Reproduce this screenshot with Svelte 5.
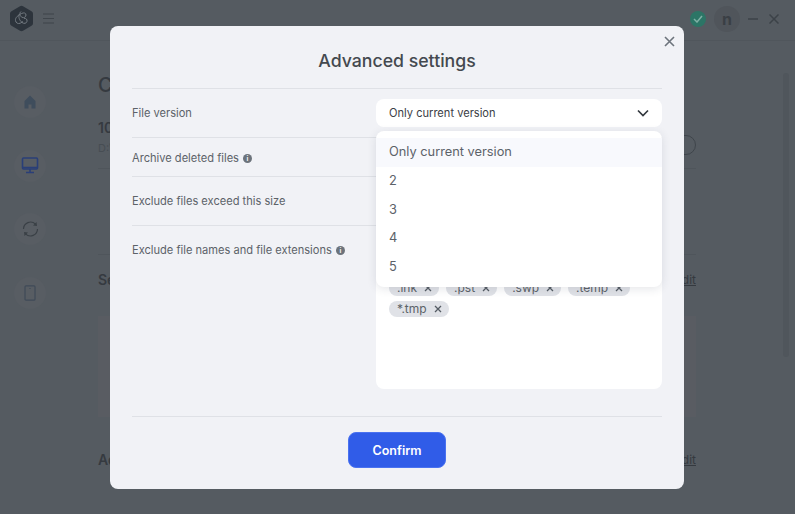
<script lang="ts">
	let versions = ['Only current version', '2', '3', '4', '5'];
	let selected = $state('Only current version');
	let open = $state(true);
	let tags = $state(['.backup', '.cache', '.download', '.lnk', '.pst', '.swp', '.temp', '*.tmp']);

	function removeTag(t: string) {
		tags = tags.filter((x) => x !== t);
	}
</script>

<div class="app">
	<header class="topbar">
		<div class="brand">
			<svg class="logo" width="25" height="27" viewBox="0 0 25 27">
				<path
					d="M11 1.200a3 3 0 0 1 3 0l8.500 5a3 3 0 0 1 1.500 2.600v9.400a3 3 0 0 1-1.500 2.600l-8.500 5a3 3 0 0 1-3 0l-8.500-5A3 3 0 0 1 1 18.200V8.800a3 3 0 0 1 1.500-2.600z"
					fill="#2d343c"
				/>
				<path
					d="M6.500 15.500c-.5-3 3-5.500 6-7 2.500-1.200 4.500-.5 4.500 1.500s-2 3.200-4 2.300-3-4.300-1-5.800M10.500 9c-1.500 3 0 6.500 2.500 8.500 2 1.500 4.500 1 5-1.200.4-1.800-1-3.300-3-3M6.500 15.500c.3 2.500 2.500 3.700 4.800 2.700l2.700-1.700"
					fill="none"
					stroke="#737a81"
					stroke-width="1"
				/>
			</svg>
			<svg class="menu" width="13" height="11" viewBox="0 0 13 11">
				<path d="M1 1h11M1 5.500h11M1 10h11" stroke="#3f454b" stroke-width="1.100" />
			</svg>
		</div>
		<div class="status">
			<span class="ok">
				<svg width="10" height="8" viewBox="0 0 10 8">
					<path d="m1 4 3 3 5-6" fill="none" stroke="#7fb0a5" stroke-width="1.500" />
				</svg>
			</span>
			<span class="avatar">n</span>
			<svg class="win-min" width="10" height="2" viewBox="0 0 10 2">
				<path d="M0 1h10" stroke="#3c4248" stroke-width="1.500" />
			</svg>
			<svg class="win-close" width="10" height="10" viewBox="0 0 10 10">
				<path d="m.5.500 9 9m0-9-9 9" stroke="#3c4248" stroke-width="1.500" />
			</svg>
		</div>
	</header>

	<div class="body">
		<nav class="sidebar">
			<span class="nav-item">
				<svg width="16" height="16" viewBox="0 0 16 16">
					<path d="M8 1.500 2.500 7v7.500h4v-4h3v4h4V7z" fill="#3f4d5c" />
				</svg>
			</span>
			<span class="nav-item">
				<svg width="18" height="17" viewBox="0 0 18 17">
					<rect x="1.500" y="1" width="15" height="11" rx="1" fill="none" stroke="#2a3f78" stroke-width="1.600" />
					<path d="M1.500 10.500h15M9 12v3M5 15.500h8" stroke="#2a3f78" stroke-width="1.600" />
				</svg>
			</span>
			<span class="nav-item">
				<svg width="19" height="18" viewBox="0 0 19 18">
					<path
						d="M2.500 9a7 7 0 0 1 12-4.800M16.500 9a7 7 0 0 1-12 4.800"
						fill="none"
						stroke="#3a4046"
						stroke-width="1.200"
					/>
					<path d="m15.500 2 .5 4-4-.5zM3.500 16 3 12l4 .5z" fill="#3a4046" />
				</svg>
			</span>
			<span class="nav-item">
				<svg width="12" height="16" viewBox="0 0 12 16">
					<rect x="1" y=".8" width="10" height="14.400" rx="1" fill="none" stroke="#3f4a58" stroke-width="1.200" />
					<path d="M6 3v1" stroke="#3f4a58" stroke-width="1.200" />
				</svg>
			</span>
		</nav>

		<main class="content">
			<h1>Computer</h1>
			<div class="source">
				<div>
					<p class="src-name">10.0.0.1</p>
					<p class="src-path">D:\Backup</p>
				</div>
				<span class="toggle"></span>
			</div>
			<div class="blank"></div>
			<div class="section-head">
				<h2>Settings</h2>
				<span class="edit">Edit</span>
			</div>
			<div class="panel"></div>
			<div class="section-head">
				<h2>Advanced</h2>
				<span class="edit">Edit</span>
			</div>
		</main>
		<div class="scrollbar"></div>
	</div>

	<div class="overlay">
		<div class="modal" role="dialog" aria-label="Advanced settings">
			<button class="close" aria-label="Close">
				<svg width="11" height="11" viewBox="0 0 11 11">
					<path d="m1 1 9 9m0-9-9 9" stroke="#6d747c" stroke-width="1.600" />
				</svg>
			</button>
			<h3>Advanced settings</h3>

			<div class="row r1">
				<span class="label">File version</span>
				<div class="field">
					<button class="select" onclick={() => (open = !open)}>
						<span>{selected}</span>
						<svg width="12" height="8" viewBox="0 0 12 8">
							<path d="m1 1.500 5 5 5-5" fill="none" stroke="#33383e" stroke-width="1.700" />
						</svg>
					</button>
					{#if open}
						<ul class="dropdown">
							{#each versions as v}
								<li class:active={v === selected}>{v}</li>
							{/each}
						</ul>
					{/if}
				</div>
			</div>

			<div class="row r2">
				<span class="label">
					Archive deleted files
					<span class="info">i</span>
				</span>
			</div>

			<div class="row r3">
				<span class="label">Exclude files exceed this size</span>
			</div>

			<div class="row r4">
				<span class="label">
					Exclude file names and file extensions
					<span class="info">i</span>
				</span>
				<div class="tagbox">
					{#each tags as t}
						<span class="tag">
							{t}
							<button class="tag-x" aria-label="Remove {t}" onclick={() => removeTag(t)}>
								<svg width="8" height="8" viewBox="0 0 8 8">
									<path d="m1 1 6 6m0-6-6 6" stroke="#555c64" stroke-width="1.300" />
								</svg>
							</button>
						</span>
					{/each}
				</div>
			</div>

			<div class="footer">
				<button class="confirm">Confirm</button>
			</div>
		</div>
	</div>
</div>

<style>
	:global(body) {
		margin: 0;
		font-family: Inter, 'Liberation Sans', sans-serif;
	}
	.app {
		position: relative;
		width: 795px;
		height: 514px;
		overflow: hidden;
		background: #555b61;
		color: #353a40;
		display: flex;
		flex-direction: column;
	}
	.topbar {
		height: 41px;
		flex: none;
		box-sizing: border-box;
		border-bottom: 1px solid #50565c;
		display: flex;
		align-items: center;
		justify-content: space-between;
		padding: 0 16px 3px 9px;
	}
	.brand,
	.status {
		display: flex;
		align-items: center;
	}
	.menu {
		margin-left: 8px;
	}
	.ok {
		width: 16px;
		height: 16px;
		border-radius: 50%;
		background: #2c7566;
		display: flex;
		align-items: center;
		justify-content: center;
	}
	.avatar {
		width: 26px;
		height: 26px;
		margin-left: 8px;
		border-radius: 50%;
		background: #50555b;
		color: #3a3f45;
		font-size: 16px;
		font-weight: 700;
		display: flex;
		align-items: center;
		justify-content: center;
	}
	.win-min {
		margin-left: 8px;
	}
	.win-close {
		margin-left: 11px;
	}
	.body {
		flex: 1;
		display: flex;
		min-height: 0;
	}
	.sidebar {
		width: 60px;
		flex: none;
		box-sizing: border-box;
		padding-top: 45px;
		display: flex;
		flex-direction: column;
		align-items: center;
		gap: 31.600px;
	}
	.nav-item {
		width: 32px;
		height: 32px;
		border-radius: 50%;
		background: #585d63;
		display: flex;
		align-items: center;
		justify-content: center;
	}
	.content {
		width: 636px;
		flex: none;
		box-sizing: border-box;
		padding: 32px 0 0 38px;
	}
	h1 {
		margin: 0;
		font-size: 20px;
		font-weight: 500;
		line-height: 24px;
	}
	.source {
		margin-top: 22px;
		height: 49px;
		border-bottom: 1px solid #4f555b;
		display: flex;
		justify-content: space-between;
		align-items: flex-start;
	}
	.src-name {
		margin: 0;
		font-size: 14px;
		font-weight: 600;
		line-height: 17px;
	}
	.src-path {
		margin: 5px 0 0;
		font-size: 11px;
		line-height: 14px;
		color: #474d53;
	}
	.toggle {
		width: 36px;
		height: 20px;
		margin-top: 16px;
		border-radius: 10px;
		box-sizing: border-box;
		border: 1px solid #3f454b;
	}
	.blank {
		height: 85px;
		border-bottom: 1px solid #4f555b;
	}
	.section-head {
		margin-top: 16px;
		height: 17px;
		display: flex;
		justify-content: space-between;
		align-items: center;
	}
	h2 {
		margin: 0;
		font-size: 14px;
		font-weight: 600;
		line-height: 17px;
	}
	.edit {
		font-size: 12px;
		text-decoration: underline;
	}
	.panel {
		margin-top: 28px;
		height: 101px;
		background: #595c62;
		box-shadow: 0 17px 0 -16px #4f555b;
		margin-bottom: 34px;
	}
	.scrollbar {
		position: absolute;
		left: 783px;
		top: 73px;
		width: 6px;
		height: 284px;
		border-radius: 3px;
		background: #50565c;
	}

	.overlay {
		position: absolute;
		inset: 0;
		display: flex;
		align-items: flex-start;
		padding: 26px 0 0 110px;
	}
	.modal {
		position: relative;
		width: 574px;
		height: 463px;
		box-sizing: border-box;
		padding: 0 22px;
		background: #f1f2f6;
		border-radius: 8px;
		display: flex;
		flex-direction: column;
	}
	.close {
		position: absolute;
		top: 10px;
		right: 9px;
		padding: 0;
		width: 11px;
		height: 11px;
		border: none;
		background: none;
		display: flex;
	}
	h3 {
		margin: 0;
		height: 63px;
		flex: none;
		box-sizing: border-box;
		padding-top: 24px;
		border-bottom: 1px solid #dfe1e6;
		font-size: 17.700px;
		font-weight: 500;
		line-height: 22px;
		color: #44494f;
		text-align: center;
	}
	.row {
		flex: none;
		box-sizing: border-box;
		display: flex;
		border-bottom: 1px solid #dfe1e6;
	}
	.r1 {
		height: 49px;
		padding-top: 10px;
	}
	.r2 {
		height: 39px;
	}
	.r3 {
		height: 49px;
	}
	.r4 {
		flex: 1;
	}
	.label {
		width: 244px;
		flex: none;
		font-size: 11.100px;
		line-height: 14px;
		color: #5c6269;
		display: flex;
		align-items: center;
		align-self: flex-start;
		gap: 4px;
		height: 28px;
	}
	.r2 .label {
		margin-top: 6px;
	}
	.r3 .label {
		margin-top: 10px;
	}
	.r4 .label {
		margin-top: 10px;
	}
	.info {
		width: 9px;
		height: 9px;
		border-radius: 50%;
		background: #6c737b;
		color: #f1f2f6;
		font-size: 7px;
		font-weight: 700;
		line-height: 9px;
		text-align: center;
	}
	.field {
		position: relative;
		flex: 1;
	}
	.select {
		width: 100%;
		height: 28px;
		padding: 0 13px;
		border: none;
		border-radius: 8px;
		background: #fff;
		font: inherit;
		font-size: 11.100px;
		color: #3b4046;
		display: flex;
		align-items: center;
		justify-content: space-between;
	}
	.dropdown {
		position: absolute;
		z-index: 2;
		top: 32px;
		left: 0;
		right: 0;
		margin: 0;
		padding: 7px 0 5px;
		list-style: none;
		background: #fff;
		border-radius: 8px;
		box-shadow: 0 2px 10px rgba(40, 50, 70, 0.12);
	}
	.dropdown li {
		height: 28.800px;
		padding: 0 13px;
		font-size: 12.800px;
		line-height: 28.800px;
		color: #5c6269;
	}
	.dropdown li.active {
		background: #f8f9fd;
	}
	.tagbox {
		flex: 1;
		align-self: flex-start;
		height: 151px;
		margin-top: 12px;
		box-sizing: border-box;
		padding: 0 13px 72px;
		background: #fff;
		border-radius: 8px;
		display: flex;
		flex-wrap: wrap;
		align-content: flex-end;
		gap: 5px 7px;
	}
	.tag {
		height: 16px;
		padding: 0 7px 0 8px;
		border-radius: 8px;
		background: #e0e2e7;
		color: #5c6269;
		font-size: 12px;
		line-height: 16px;
		display: flex;
		align-items: center;
		gap: 7px;
	}
	.tag-x {
		padding: 0;
		border: none;
		background: none;
		display: flex;
	}
	.footer {
		flex: none;
		height: 72px;
		display: flex;
		justify-content: center;
		padding-top: 15px;
		box-sizing: border-box;
	}
	.confirm {
		width: 98px;
		height: 36px;
		border: 1px solid #4a72f0;
		border-radius: 8px;
		background: #305ce8;
		color: #fff;
		font: inherit;
		font-size: 12.500px;
		font-weight: 600;
	}
</style>
